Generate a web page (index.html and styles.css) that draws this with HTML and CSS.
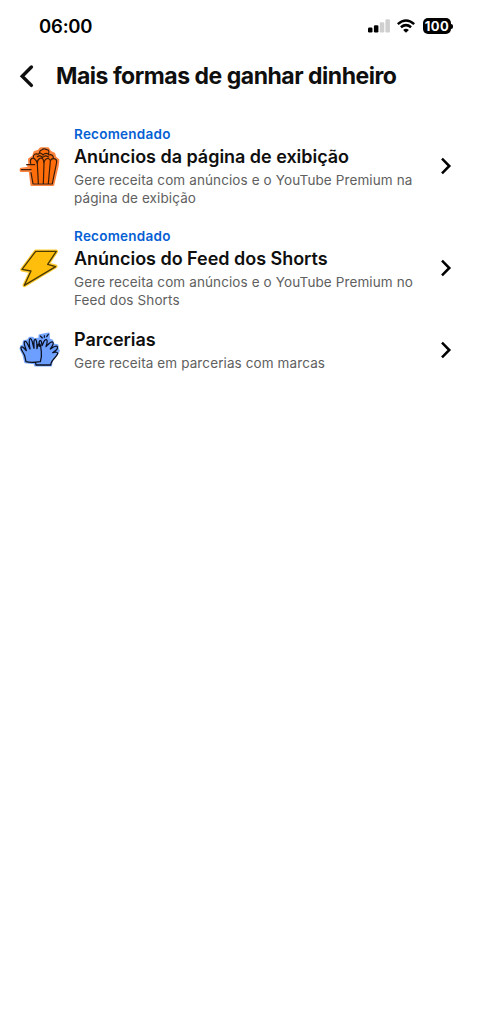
FILE: index.html
```html
<!DOCTYPE html>
<html lang="pt-BR">
<head>
<meta charset="utf-8">
<title>Mais formas de ganhar dinheiro</title>
<link rel="stylesheet" href="styles.css">
</head>
<body>
<div class="status">
  <span class="time">06:00</span>
  <svg class="signal" viewBox="0 0 22 14" width="22" height="14"><rect x="0" y="8.5" width="4.5" height="5" rx="1.2"/><rect x="5.9" y="6.3" width="4.5" height="7.2" rx="1.2"/><g fill="#cfcfcf"><rect x="11.8" y="3.2" width="4.5" height="10.3" rx="1.2"/><rect x="17.4" y="0.3" width="4.5" height="13.2" rx="1.2"/></g></svg>
  <svg class="wifi" viewBox="0 0 18 14" width="18" height="14" fill="none" stroke="#000" stroke-width="2.5"><path d="M.8 5.1Q9-2.2 17.2 5.1M3.9 8.3Q9 4 14.1 8.3"/><path d="M9 13.8 6.1 10.9Q9 8.5 11.9 10.9Z" fill="#000" stroke="none"/></svg>
  <div class="battery">100</div><i class="cap"></i>
</div>
<header class="header">
  <svg class="back" viewBox="0 0 16 24" width="16" height="24" fill="none" stroke="#0f0f0f" stroke-width="3.4" stroke-linecap="round" stroke-linejoin="miter"><path d="M13.4 3 4.2 12.2l9.2 9.2"/></svg>
  <h1 class="heading">Mais formas de ganhar dinheiro</h1>
</header>
<main class="list">
  <section class="row">
    <svg class="icon" viewBox="0 0 156 156" width="52" height="52" stroke-linecap="round" stroke-linejoin="round">
      <path d="M47 72 46 58 58 50 62 37 74 33 80 26 102 26 108 36 120 42 123 53 132 60 130 78 117 134 53 134 48 92H21v-5l23-3V76Z" fill="#ff6c0a" stroke="#ff8540" stroke-width="8"/>
      <g fill="none" stroke="#3a1d08" stroke-width="3.6"><path d="M50 70C46 57 56 51 62 57q6 4 8 15C69 55 83 49 88 59l2 13C90 55 105 50 109 62c4-9 20-9 19 4-3 18-9 43-13 66H57l-6-34M70 72l3 58M90 72l-2 59M109 63l-6 68M58 52c0-9 7-13 14-9 5-5 12-4 15 2 6-7 15-6 17 0 9-3 15 2 14 10M77 40c-1-7 1-9 6-10 4-5 12-4 15-1 6 0 8 5 6 11M70 50l8-3 8 5 9-5 9 4M38 74h24M22 89h29"/></g>
    </svg>
    <div class="copy">
      <p class="tag">Recomendado</p>
      <h2 class="title">Anúncios da página de exibição</h2>
      <p class="desc">Gere receita com anúncios e o YouTube Premium na<br>página de exibição</p>
    </div>
    <svg class="chev" viewBox="0 0 12 18" width="12" height="18"><path d="M2 1.7 9.3 9 2 16.3"/></svg>
  </section>
  <section class="row">
    <svg class="icon" viewBox="0 0 156 156" width="52" height="52" stroke-linejoin="round">
      <path d="M65 28h62L101 67l24 6-94 57 20-42-27-5Z" fill="#ffbe0b" stroke="#ffcb2f" stroke-width="11"/>
      <path d="M65 28h62L101 67l24 7-94 56 20-43-27-5Z" fill="#ffbe0b" stroke="#4a3905" stroke-width="4"/>
    </svg>
    <div class="copy">
      <p class="tag">Recomendado</p>
      <h2 class="title">Anúncios do Feed dos Shorts</h2>
      <p class="desc">Gere receita com anúncios e o YouTube Premium no<br>Feed dos Shorts</p>
    </div>
    <svg class="chev" viewBox="0 0 12 18" width="12" height="18"><path d="M2 1.7 9.3 9 2 16.3"/></svg>
  </section>
  <section class="row short">
    <svg class="icon" viewBox="0 0 156 156" width="52" height="52" stroke-linecap="round" stroke-linejoin="round">
      <path d="M34 114 29 93 20 74 23 66 29 64 30 52 42 49 47 42 56 42 60 46 70 45 76 50 77 34 104 29 104 46 114 50 118 62 130 64 131 76 134 80 130 88 113 106 111 124 64 124 62 117Z" fill="#6c9fff" stroke="#77a7ff" stroke-width="7"/>
      <g fill="none" stroke="#0b1020" stroke-width="3.8"><path d="M36 113 32 95C28 84 17 74 22 69c5-4 10 7 15 11C34 70 27 54 33 52c6-2 10 15 15 23-2-12-5-30 1-31 6 0 7 19 11 29 0-12-2-27 4-27 6 1 4 18 5 28 2-7 2-15 7-15 5 1 4 15 6 23 1 11 1 20-3 31-13 2-29 4-43 0ZM65 117l1 6h44c1-13 13-20 20-32 5-7-7-8-14-5 8-5 17-12 14-18-4-5-15 3-21 7 6-8 12-17 7-21-5-4-14 8-20 14 2-8 7-19 1-21-6-2-9 11-13 18-1-7-1-17-6-15-4 2-3 10-2 17"/><path d="M79 36l6 6M91 35v5M103 31l-5 7" stroke-width="3.5"/></g>
    </svg>
    <div class="copy">
      <h2 class="title">Parcerias</h2>
      <p class="desc">Gere receita em parcerias com marcas</p>
    </div>
    <svg class="chev" viewBox="0 0 12 18" width="12" height="18"><path d="M2 1.7 9.3 9 2 16.3"/></svg>
  </section>
</main>
</body>
</html>
```
FILE: styles.css
```css
* { box-sizing: border-box; }
body { margin: 0; background: #fff; color: #0f0f0f; font-family: Inter, "Liberation Sans", sans-serif; height: 1035px; overflow: hidden; }
h1, h2, p { margin: 0; font-weight: inherit; white-space: nowrap; }
svg { flex: none; display: block; }
.status { display: flex; align-items: center; height: 52px; padding-left: 39px; }
.time { width: 329px; font-size: 18.5px; font-weight: 600; letter-spacing: -0.2px; color: #000; }
.wifi { margin-left: 7px; }
.battery { margin-left: 8px; width: 28px; height: 16px; border-radius: 5px; background: #000; color: #fff; font-size: 13px; line-height: 16px; font-weight: 700; letter-spacing: 0.4px; text-align: center; }
.cap { width: 2px; height: 5px; margin-left: 0; background: #000; border-radius: 0 2px 2px 0; }
.header { display: flex; align-items: center; height: 48px; padding-left: 18px; }
.heading { margin-left: 22px; font-size: 23px; font-weight: 700; letter-spacing: -0.48px; }
.list { padding-top: 24px; }
.row { display: flex; align-items: flex-start; height: 102px; padding-left: 14px; }
.icon { margin-top: 16px; }
.copy { width: 374px; padding: 1px 0 0 8px; }
.tag { font-size: 13.5px; line-height: 19px; font-weight: 600; color: #065fd4; letter-spacing: 0.25px; }
.title { font-size: 18px; line-height: 26px; font-weight: 600; letter-spacing: -0.03px; }
.desc { font-size: 13.5px; line-height: 18px; color: #606060; letter-spacing: 0.11px; padding-top: 1px; }
.chev { margin-top: 33px; fill: none; stroke: #000; stroke-width: 2.5; stroke-linejoin: miter; }
.short .copy { margin-top: -2px; }
.short .icon { margin-top: -4px; }
.short .chev { margin-top: 13px; }
```
